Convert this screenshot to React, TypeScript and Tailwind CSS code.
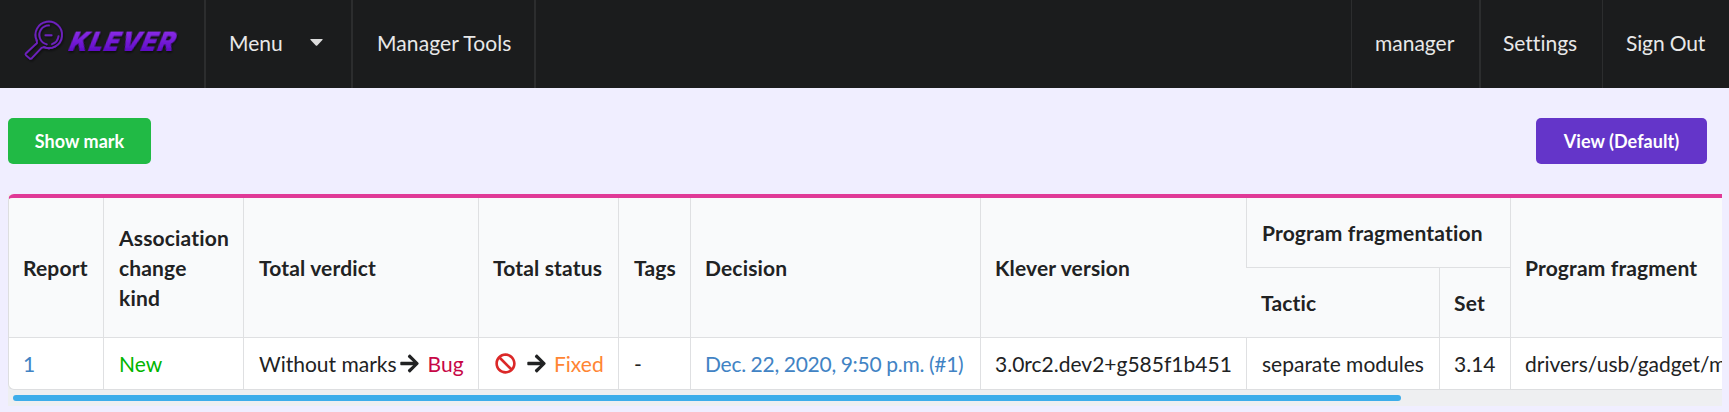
import type { ReactNode } from "react";
import { FaArrowRight, FaBan } from "react-icons/fa";

function Logo() {
  return (
    <svg width="204" height="88" viewBox="0 0 204 88" className="block">
      <defs>
        <linearGradient id="logoFill" x1="0" y1="0" x2="0" y2="1">
          <stop offset="0.2" stopColor="#8a2be8" />
          <stop offset="0.8" stopColor="#5f0cc6" />
        </linearGradient>
        <filter id="logoShadow" x="-10%" y="-20%" width="125%" height="160%">
          <feDropShadow dx="1" dy="1.5" stdDeviation="1.2" floodColor="#000" floodOpacity="0.6" />
        </filter>
      </defs>
      <g filter="url(#logoShadow)" fill="none" stroke="#6c20bc" strokeWidth="1.9" strokeLinejoin="round" strokeLinecap="round">
        <path d="M36.700 40.500A13.300 13.300 0 1 1 43.800 47.200" />
        <path d="M49 25.400A9.600 9.600 0 0 0 40 38.500Q42 43.300 46.800 44.400" />
        <path d="M58.500 36.200A9.600 9.600 0 0 1 52 44.200" />
        <path d="M45.400 35.200h6.200" />
        <path d="M36.700 40.500L37 43L26 53.200q-1 1.200 0 2.200l3.500 3q1.200.800 2.300-.2L41.500 47.800L43.800 47.200Q50 49.500 55.500 46.500" />
      </g>
      <text
        x="0"
        y="0"
        transform="translate(68 51) skewX(-14)"
        textLength="106"
        lengthAdjust="spacingAndGlyphs"
        filter="url(#logoShadow)"
        fill="url(#logoFill)"
        className="font-['Inter',sans-serif] text-[27px] font-black tracking-[1.2px] italic"
      >
        KLEVER
      </text>
    </svg>
  );
}

function Th({ children, rowSpan, colSpan, className = "pl-[15px]" }: { children: ReactNode; rowSpan?: number; colSpan?: number; className?: string }) {
  return (
    <th rowSpan={rowSpan} colSpan={colSpan} className={`border-b border-[#dfe0e2] bg-[#f9fafb] py-0 pr-[14px] text-left align-middle font-bold tracking-[0.16px] ${className}`}>
      {children}
    </th>
  );
}

function Td({ children, className = "border-l pl-[15px]" }: { children: ReactNode; className?: string }) {
  return <td className={`h-[51px] border-[#dfe0e2] py-0 pr-0 align-middle whitespace-nowrap ${className}`}>{children}</td>;
}

export default function App() {
  return (
    <div className="flex h-[412px] w-[1729px] flex-col overflow-hidden bg-[#f0eeff] font-['Lato',sans-serif] text-[21px] leading-[30px] text-[#212223] [font-variant-ligatures:none]">
      <nav className="flex h-[88px] shrink-0 bg-[#1b1c1d] text-[#e8e8e8]">
        <div className="w-[206px] border-r-2 border-[#2c2d2e]">
          <Logo />
        </div>
        <div className="flex w-[147px] items-center justify-between border-r-2 border-[#2c2d2e] pr-[28px] pb-[2px] pl-[23px]">
          Menu
          <svg width="13" height="7" viewBox="0 0 13 7" className="mb-[1px]">
            <path d="M.8 0h11.400q.8.300.2 1L7.200 6.500q-.7.600-1.400 0L.6 1Q0 .300.8 0Z" fill="#dcdcdc" />
          </svg>
        </div>
        <div className="flex w-[183px] items-center border-r-2 border-[#2c2d2e] pb-[2px] pl-6 tracking-[0.1px]">Manager Tools</div>
        <div className="ml-auto flex w-[128px] items-center border-l border-[#2c2d2e] pb-[2px] pl-[23px]">manager</div>
        <div className="flex w-[123px] items-center border-l-2 border-[#2c2d2e] pb-[2px] pl-[22px]">Settings</div>
        <div className="flex w-[127px] items-center border-l border-[#2c2d2e] pb-[2px] pl-[23px] tracking-[-0.12px]">Sign Out</div>
      </nav>

      <div className="mt-[30px] flex h-[46px] shrink-0 justify-between pr-[22px] pl-2 text-[18px] leading-[18px] font-bold tracking-[0.05px] text-white">
        <button className="h-[46px] w-[143px] rounded-[5px] bg-[#21ba45]">Show mark</button>
        <button className="h-[46px] w-[171px] rounded-[5px] bg-[#6435c9]">View (Default)</button>
      </div>

      <div className="mt-[30px] ml-2 h-[212px] w-[1714px] overflow-hidden bg-[#eeeff1]">
        <div className="h-[196px] w-[1890px] overflow-hidden rounded-[6px] border-t-4 border-b border-l border-[#dddee0] border-t-[#e03997] bg-white">
          <table className="w-[1889px] table-fixed border-separate border-spacing-0">
            <colgroup>
              <col className="w-[94px]" />
              <col className="w-[140px]" />
              <col className="w-[235px]" />
              <col className="w-[140px]" />
              <col className="w-[72px]" />
              <col className="w-[290px]" />
              <col className="w-[266px]" />
              <col className="w-[193px]" />
              <col className="w-[71px]" />
              <col className="w-[388px]" />
            </colgroup>
            <thead>
              <tr className="h-[70px]">
                <Th rowSpan={2} className="pl-[14px]">Report</Th>
                <Th rowSpan={2} className="border-l pl-[15px]">Association change kind</Th>
                <Th rowSpan={2} className="border-l pl-[15px]">Total verdict</Th>
                <Th rowSpan={2} className="border-l pl-[14px] whitespace-nowrap">Total status</Th>
                <Th rowSpan={2} className="border-l pl-[15px] whitespace-nowrap">Tags</Th>
                <Th rowSpan={2} className="border-l pl-[14px]">Decision</Th>
                <Th rowSpan={2} className="border-l pl-[14px]">Klever version</Th>
                <Th colSpan={2} className="border-l pl-[15px]">Program fragmentation</Th>
                <Th rowSpan={2} className="border-l pl-[14px]">Program fragment</Th>
              </tr>
              <tr className="h-[70px]">
                <Th>Tactic</Th>
                <Th className="border-l pl-[14px]">Set</Th>
              </tr>
            </thead>
            <tbody>
              <tr>
                <Td className="pl-[14px] text-[#4183c4]">1</Td>
                <Td className="border-l pl-[15px] text-[#00b500]">New</Td>
                <Td>
                  <span className="flex items-center">
                    Without marks
                    <FaArrowRight size={21} className="mr-[8px] ml-[2px]" />
                    <span className="text-[#c70646]">Bug</span>
                  </span>
                </Td>
                <Td>
                  <span className="flex items-center">
                    <FaBan size={21} className="ml-[1px] text-[#db2828]" />
                    <FaArrowRight size={21} className="mr-[7px] ml-[10px]" />
                    <span className="text-[#ff8533]">Fixed</span>
                  </span>
                </Td>
                <Td>-</Td>
                <Td className="border-l pl-[14px] tracking-[-0.25px] text-[#4183c4] [word-spacing:-0.4px]">Dec. 22, 2020, 9:50 p.m. (#1)</Td>
                <Td className="border-l pl-[14px]">3.0rc2.dev2+g585f1b451</Td>
                <Td>separate modules</Td>
                <Td className="border-l pl-[14px]">3.14</Td>
                <Td className="border-l pl-[14px]">drivers/usb/gadget/m</Td>
              </tr>
            </tbody>
          </table>
        </div>
        <div className="flex h-4 items-start pt-[5px] pl-[5px]">
          <div className="h-[6px] w-[1388px] rounded-full bg-[#3dadea]" />
        </div>
      </div>
    </div>
  );
}
